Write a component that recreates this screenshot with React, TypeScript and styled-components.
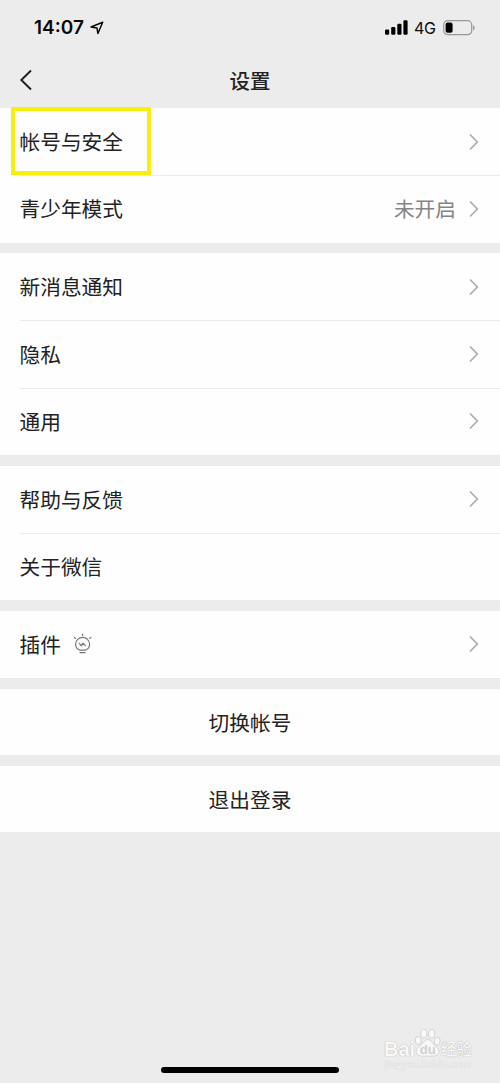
import React from 'react';
import styled, { createGlobalStyle } from 'styled-components';

const GlobalStyle = createGlobalStyle`
  * { box-sizing: border-box; }
  body {
    margin: 0;
    background: #ececec;
    font-family: "Noto Sans CJK SC", sans-serif;
    color: #222;
  }
`;

const Screen = styled.div`
  position: relative;
  display: flex;
  flex-direction: column;
  width: 500px;
  height: 1083px;
  overflow: hidden;
  background: #ececec;
`;

const StatusBar = styled.header`
  display: flex;
  align-items: center;
  justify-content: space-between;
  height: 55px;
  padding: 0 25px 0 34px;
  font-family: Inter, sans-serif;
  color: #0a0a0a;
`;

const StatusGroup = styled.div`
  display: flex;
  align-items: center;
`;

const Clock = styled.span`
  width: 51px;
  margin-right: 5px;
  font-size: 19px;
  font-weight: 600;
  white-space: nowrap;
`;

const Network = styled.span`
  width: 22px;
  margin: 1px 7px 0 6px;
  font-size: 16px;
  font-weight: 400;
  letter-spacing: -0.3px;
`;

const NavBar = styled.nav`
  display: grid;
  grid-template-columns: 60px 1fr 60px;
  align-items: center;
  height: 53px;
  padding-bottom: 3px;
`;

const BackButton = styled.button`
  display: flex;
  padding: 0 0 0 19px;
  border: 0;
  background: none;
  color: #1c1c1c;
`;

const Title = styled.h1`
  margin: 0;
  font-size: 20.5px;
  line-height: 30px;
  font-weight: 500;
  text-align: center;
`;

const Groups = styled.main`
  display: flex;
  flex-direction: column;
  gap: 10.7px;
`;

const Group = styled.section`
  background: #fefefe;
`;

const Row = styled.div<{ $center?: boolean }>`
  position: relative;
  display: flex;
  align-items: center;
  justify-content: ${p => (p.$center ? 'center' : 'flex-start')};
  height: ${p => (p.$center ? 66.4 : 67.25)}px;
  padding: 0 ${p => (p.$center ? 0 : 20)}px 0 ${p => (p.$center ? 0 : 19.5)}px;
  font-size: 20.7px;
  line-height: 30px;

  & + &::before {
    content: '';
    position: absolute;
    top: 0;
    left: 20px;
    right: 0;
    height: 1px;
    background: #ebebeb;
  }
`;

const Label = styled.span`
  padding-bottom: 0.8px;
  white-space: nowrap;
`;

const Trailing = styled.span`
  display: flex;
  align-items: center;
  gap: 12px;
  margin-left: auto;
  color: #858585;
`;

const Highlight = styled.div`
  position: absolute;
  z-index: 1;
  top: 107px;
  left: 11px;
  width: 140px;
  height: 68px;
  border: 4px solid #fbee0a;
`;

const HomeIndicator = styled.div`
  position: absolute;
  left: 161px;
  bottom: 10px;
  width: 178px;
  height: 6px;
  border-radius: 3px;
  background: #000;
`;

const Watermark = styled.div`
  position: absolute;
  left: 384px;
  top: 1028px;
  width: 92px;
  color: #f8f8f8;
  text-shadow: 0 0 1px #aaa, 0 0 1px #ccc;
`;

const Brand = styled.div`
  display: flex;
  align-items: center;
  height: 32px;
`;

const BrandLatin = styled.span`
  width: 30px;
  padding-top: 9px;
  font: 700 20px/22px "Liberation Sans", sans-serif;
`;

const BrandHan = styled.span`
  padding-top: 8px;
  font-size: 15.5px;
  line-height: 22px;
  font-weight: 500;
  white-space: nowrap;
`;

const Site = styled.div`
  margin-top: -1px;
  font: 11.7px/12px "Liberation Serif", serif;
  color: #f5f5f5;
  text-shadow: 0 0 1px #bbb;
  white-space: nowrap;
`;

const PawMark = styled.svg`
  flex: none;
  text-shadow: none;
`;

const PawText = styled.text`
  fill: #d0d0d0;
  stroke: none;
  font: 700 13px "Liberation Sans", sans-serif;
  text-anchor: middle;
`;

const PluginIcon = styled.svg`
  margin-left: 12px;
`;

const Chevron = () => (
  <svg width="12" height="18" viewBox="0 0 12 18" fill="none" stroke="#adadad" strokeWidth="1.7">
    <path d="M2 1.5 9.3 9 2 16.5" />
  </svg>
);

const Bulb = () => (
  <PluginIcon width="19" height="22" viewBox="0 0 19 22" fill="none" stroke="#777" strokeWidth="1.2" strokeLinecap="round">
    <path d="M6.7 17.2C4.3 16.2 2.6 14 2.6 11.3a7 7 0 0 1 14 0c0 2.7-1.7 4.9-4.1 5.9Z" />
    <path d="M7 19.6h5.200M9.6 1v1.400M1.400 4.500l1 .8M17.800 4.500l-1 .8" />
    <path d="m6.300 10.300 2 2.400 1.700-2.400 2.400 2.400" />
  </PluginIcon>
);

const Paw = () => (
  <PawMark width="27" height="32" viewBox="0 0 27 32" fill="#f8f8f8" stroke="#cacaca" strokeWidth=".8">
    <ellipse cx="4.2" cy="12.6" rx="2.9" ry="3.9" transform="rotate(-12 4.2 12.6)" />
    <ellipse cx="9.800" cy="5.500" rx="3.100" ry="4.400" />
    <ellipse cx="17.700" cy="5.800" rx="3.100" ry="4.400" transform="rotate(12 17.700 5.800)" />
    <ellipse cx="23.200" cy="13.200" rx="2.900" ry="3.900" transform="rotate(12 23.200 13.200)" />
    <path d="M13.700 11.500c3 0 4.200 3.200 6.600 5.400 2.600 2.400 5.600 4 4.600 7.700-1 3.800-4.800 3.600-11.200 3.600S3.700 28.600 2.400 24.800c-1-3.600 2.300-5.400 4.700-7.900 2.200-2.200 3.600-5.400 6.600-5.400Z" />
    <PawText x="13.700" y="25.500">du</PawText>
  </PawMark>
);

type Item = { label: string; value?: string; arrow?: boolean; bulb?: boolean; center?: boolean };

const groups: Item[][] = [
  [{ label: '帐号与安全', arrow: true }, { label: '青少年模式', value: '未开启', arrow: true }],
  [{ label: '新消息通知', arrow: true }, { label: '隐私', arrow: true }, { label: '通用', arrow: true }],
  [{ label: '帮助与反馈', arrow: true }, { label: '关于微信' }],
  [{ label: '插件', arrow: true, bulb: true }],
  [{ label: '切换帐号', center: true }],
  [{ label: '退出登录', center: true }],
];

export default function App() {
  return (
    <Screen>
      <GlobalStyle />
      <StatusBar>
        <StatusGroup>
          <Clock>14:07</Clock>
          <svg width="14" height="14" viewBox="0 0 14 14" fill="none" stroke="#0a0a0a" strokeWidth="1.5" strokeLinejoin="round">
            <path d="M12.7 1.3 1 6l6 1 .9 5.5Z" />
          </svg>
        </StatusGroup>
        <StatusGroup>
          <svg width="23" height="15" viewBox="0 0 23 15">
            <rect x="0" y="9.5" width="4.2" height="5.2" rx="1.2" />
            <rect x="6.2" y="7" width="4.2" height="7.7" rx="1.2" />
            <rect x="12.3" y="3.8" width="4.2" height="10.9" rx="1.2" />
            <rect x="18.4" y=".3" width="4.2" height="14.4" rx="1.2" />
          </svg>
          <Network>4G</Network>
          <svg width="32" height="16" viewBox="0 0 32 16">
            <rect x=".7" y=".7" width="28" height="14" rx="4" fill="none" stroke="#999" strokeWidth="1.2" />
            <rect x="2.6" y="2.6" width="7" height="10.2" rx="2" />
            <path d="M30.2 5.2c1.8.6 1.8 4.4 0 5Z" fill="#888" />
          </svg>
        </StatusGroup>
      </StatusBar>
      <NavBar>
        <BackButton aria-label="返回">
          <svg width="14" height="22" viewBox="0 0 14 22" fill="none" stroke="currentColor" strokeWidth="1.9">
            <path d="M12 1.5 2.3 11 12 20.5" />
          </svg>
        </BackButton>
        <Title>设置</Title>
      </NavBar>
      <Groups>
        {groups.map((items, i) => (
          <Group key={i}>
            {items.map(item => (
              <Row key={item.label} $center={item.center}>
                <Label>{item.label}</Label>
                {item.bulb && <Bulb />}
                {item.arrow && (
                  <Trailing>
                    {item.value && <Label>{item.value}</Label>}
                    <Chevron />
                  </Trailing>
                )}
              </Row>
            ))}
          </Group>
        ))}
      </Groups>
      <Highlight />
      <Watermark>
        <Brand>
          <BrandLatin>Bai</BrandLatin>
          <Paw />
          <BrandHan>经验</BrandHan>
        </Brand>
        <Site>jingyan.baidu.com</Site>
      </Watermark>
      <HomeIndicator />
    </Screen>
  );
}
